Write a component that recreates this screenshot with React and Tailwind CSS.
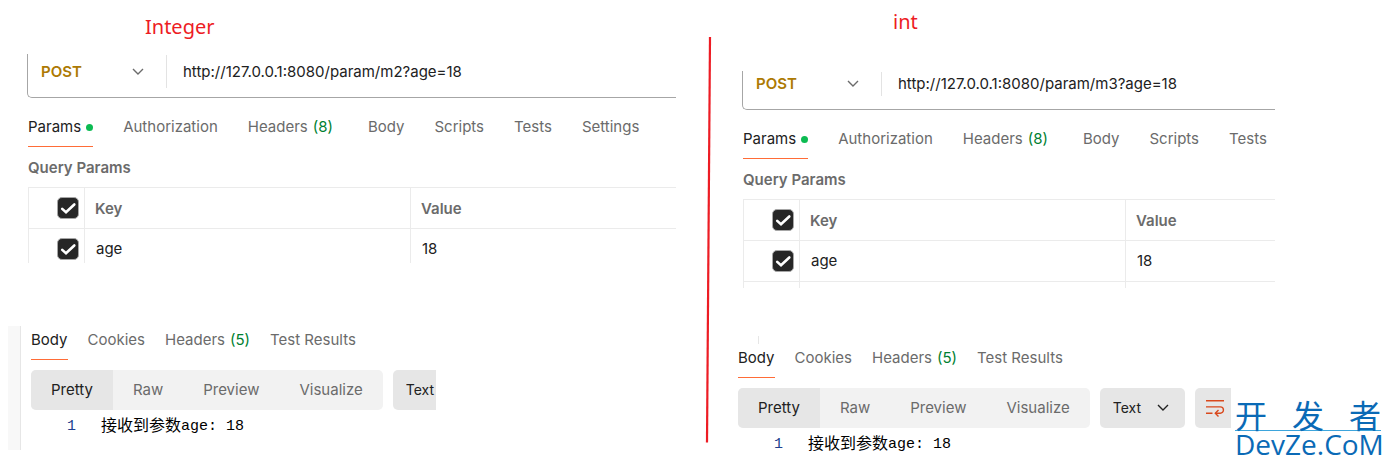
import React from "react";

const requestTabs = ["Params", "Authorization", "Headers", "Body", "Scripts", "Tests", "Settings"];
const responseTabs = ["Body", "Cookies", "Headers", "Test Results"];
const views = ["Pretty", "Raw", "Preview", "Visualize"];

function Chevron({ className }) {
  return (
    <svg className={className} width="12" height="8" viewBox="0 0 12 8" fill="none" stroke="currentColor" strokeWidth="1.4" aria-hidden="true">
      <path d="M1 1l5 5 5-5" />
    </svg>
  );
}

function Check({ label }) {
  return (
    <span className="ml-7 grid size-[22px]">
      <input
        type="checkbox"
        defaultChecked
        aria-label={label}
        className="col-start-1 row-start-1 size-[22px] appearance-none rounded-[5px] border border-[#a6a6a6] bg-[#262626]"
      />
      <svg className="pointer-events-none col-start-1 row-start-1 size-[22px]" viewBox="0 0 22 22" fill="none" stroke="#fff" strokeWidth="2.6" aria-hidden="true">
        <path d="M5.200 11.900L9 15.300 17.300 7.500" strokeLinecap="round" />
      </svg>
    </span>
  );
}

function RequestBar({ id, url, className }) {
  return (
    <div className={`flex rounded-bl-[5px] border-b border-l border-[#a6a6a6] text-[15px] ${className}`}>
      <div className="grid w-[138px] shrink-0 items-center">
        <select
          aria-label="Method"
          defaultValue="POST"
          className="col-start-1 row-start-1 w-full appearance-none bg-transparent pl-[13px] leading-5 font-semibold text-[#ad7a03]"
        >
          <option>POST</option>
        </select>
        <Chevron className="pointer-events-none col-start-1 row-start-1 ml-[104px] text-[#6b6b6b]" />
      </div>
      <div className="my-px w-px shrink-0 bg-[#e3e3e3]" />
      <input
        id={id}
        aria-label="Request URL"
        defaultValue={url}
        className="min-w-0 flex-1 bg-transparent pl-4 leading-5 text-[#212121]"
      />
    </div>
  );
}

function RequestTabs({ tabs }) {
  return (
    <div role="tablist" className="mt-[17px] flex gap-[30px] pl-px text-[15px] leading-6 text-[#6b6b6b]">
      {tabs.map((t, i) => (
        <button
          key={t}
          type="button"
          role="tab"
          aria-selected={i === 0}
          className={
            i === 0
              ? "flex h-8 items-start gap-[5px] border-b border-[#ff6c37] text-[#212121]"
              : t === "Headers"
                ? "flex h-8 items-start gap-[5px] pr-[5px]"
                : "flex h-8 items-start"
          }
        >
          {t}
          {i === 0 && <span className="mt-[9px] size-[7px] rounded-full bg-[#0cbb52]" />}
          {t === "Headers" && <span className="text-[#007f31]">(8)</span>}
        </button>
      ))}
    </div>
  );
}

function ParamsTable({ className, extraRow }) {
  const line = "border border-[#ebebeb]";
  return (
    <div className={`mt-[9px] ml-px overflow-hidden ${className}`}>
      <table className="w-full table-fixed border-collapse border-t border-l border-[#ebebeb] text-left text-[15px] leading-5">
        <colgroup>
          <col className="w-[56px]" />
          <col className="w-[326px]" />
          <col />
        </colgroup>
        <thead className="font-semibold text-[#6b6b6b]">
          <tr className="h-[41px]">
            <th className={line}><Check label="Select all params" /></th>
            <th className={`${line} pt-[2px] pl-[10px] font-semibold`}>Key</th>
            <th className={`${line} border-r-0 pt-[2px] pl-[10px] font-semibold`}>Value</th>
          </tr>
        </thead>
        <tbody className="text-[#212121]">
          <tr className="h-[41px]">
            <td className={line}><Check label="Include age" /></td>
            <td className={`${line} pl-[11px]`}>age</td>
            <td className={`${line} border-r-0 pl-[11px]`}>18</td>
          </tr>
          {extraRow && (
            <tr className="h-[41px]">
              <td className={line} />
              <td className={line} />
              <td className={`${line} border-r-0`} />
            </tr>
          )}
        </tbody>
      </table>
    </div>
  );
}

function Response({ full }) {
  return (
    <div className="text-[15px]">
      <div role="tablist" className="flex gap-5 leading-6 text-[#6b6b6b]">
        {responseTabs.map((t, i) => (
          <button
            key={t}
            type="button"
            role="tab"
            aria-selected={i === 0}
            className={i === 0 ? "flex h-8 items-start border-b border-[#ff6c37] text-[#212121]" : "flex h-8 items-start gap-[5px]"}
          >
            {t}
            {t === "Headers" && <span className="text-[#007f31]">(5)</span>}
          </button>
        ))}
      </div>
      <div className="mt-[10px] flex h-10 gap-[10px]">
        <div className="flex overflow-hidden rounded-[5px] bg-[#f2f2f2] text-[#6b6b6b]">
          {views.map((v, i) => (
            <button key={v} type="button" className={i === 0 ? "bg-[#e6e6e6] px-5 text-[#212121]" : "px-5"}>
              {v}
            </button>
          ))}
        </div>
        <div className={full ? "grid w-[85px] items-center rounded-[5px] bg-[#e6e6e6] text-[#212121]" : "grid w-[43px] items-center overflow-hidden rounded-l-[5px] bg-[#e6e6e6] text-[#212121]"}>
          <select aria-label="Response format" defaultValue="Text" className="col-start-1 row-start-1 w-full appearance-none bg-transparent pl-[13px] text-[14px] leading-5">
            <option>Text</option>
          </select>
          {full && <Chevron className="pointer-events-none col-start-1 row-start-1 ml-[57px]" />}
        </div>
        {full && (
          <button type="button" aria-label="Wrap lines" className="flex w-9 items-center rounded-l-[5px] bg-[#e6e6e6] pl-[10px] text-[#d9481c]">
            <svg width="20" height="18" viewBox="0 0 20 18" fill="none" stroke="currentColor" strokeWidth="1.4" aria-hidden="true">
              <path d="M1 1.700h18M1 7.900h14.300a3.100 3.100 0 0 1 0 6.300H10.500M1 14.200h6.500" />
              <path d="M13.500 11l-3.200 3.200 3.200 3.200" />
            </svg>
          </button>
        )}
      </div>
      <div className="mt-[7px] flex items-center font-['Liberation_Mono','Noto_Sans_CJK_SC',monospace] leading-5">
        <span className="w-[45px] text-right text-[#1f3f8f]">1</span>
        <code className="flex items-center pl-[25px] font-['Liberation_Mono','Noto_Sans_CJK_SC',monospace] whitespace-pre text-black">
          <span className="text-[16px]">接收到参数</span>
          <span>age: 18</span>
        </code>
      </div>
    </div>
  );
}

export default function App() {
  return (
    <main className="relative grid grid-cols-[minmax(0,676fr)_66px_minmax(0,649fr)] bg-white pb-[10px] font-['Inter',sans-serif]">
      <section>
        <h2 className="h-[54px] pt-[13px] pl-[145px] font-['Noto_Sans',sans-serif] text-[20px] leading-7 text-[#ed1c24]">Integer</h2>
        <div className="pl-[27px]">
          <RequestBar id="url-m2" url="http://127.0.0.1:8080/param/m2?age=18" className="h-11 pb-2" />
          <RequestTabs tabs={requestTabs} />
          <h3 className="mt-[11px] pl-px text-[15px] leading-5 font-semibold text-[#6b6b6b]">Query Params</h3>
          <ParamsTable className="h-[76px]" />
        </div>
        <div className="mt-[63px] ml-2 flex">
          <div className="w-[13px] border-r border-[#e6e6e6] bg-[#f8f8f8]" />
          <div className="pt-[2px] pb-[13px] pl-[10px]">
            <Response />
          </div>
        </div>
      </section>

      <svg className="mt-[37px] h-[406px] w-full" viewBox="0 0 66 406" aria-hidden="true">
        <path d="M34 0L31 405.500" stroke="#ed1c24" strokeWidth="2.200" />
      </svg>

      <section>
        <h2 className="h-[71px] pt-2 pl-[151px] font-['Noto_Sans',sans-serif] text-[20px] leading-7 text-[#ed1c24]">int</h2>
        <div className="pr-[116px]">
          <RequestBar id="url-m3" url="http://127.0.0.1:8080/param/m3?age=18" className="h-[39px] pb-3" />
          <RequestTabs tabs={requestTabs.slice(0, 6)} />
          <h3 className="mt-[11px] pl-px text-[15px] leading-5 font-semibold text-[#6b6b6b]">Query Params</h3>
          <ParamsTable className="h-[89px]" extraRow />
        </div>
        <div className="-ml-1 pt-12">
          <div className="mb-[2px] ml-5 h-2 w-px bg-[#e6e6e6]" />
          <Response full />
        </div>
      </section>

      <aside className="absolute right-[10px] bottom-[8px] w-[146px] text-[#0a6ab6]">
        <div className="flex justify-between font-['Noto_Sans_CJK_SC',sans-serif] text-[32px] leading-8">
          <span>开</span>
          <span>发</span>
          <span>者</span>
        </div>
        <div className="h-px bg-[#3da5dc]" />
        <div className="font-['Open_Sans',sans-serif] text-[28px] leading-[26px]">DevZe.CoM</div>
      </aside>
    </main>
  );
}
